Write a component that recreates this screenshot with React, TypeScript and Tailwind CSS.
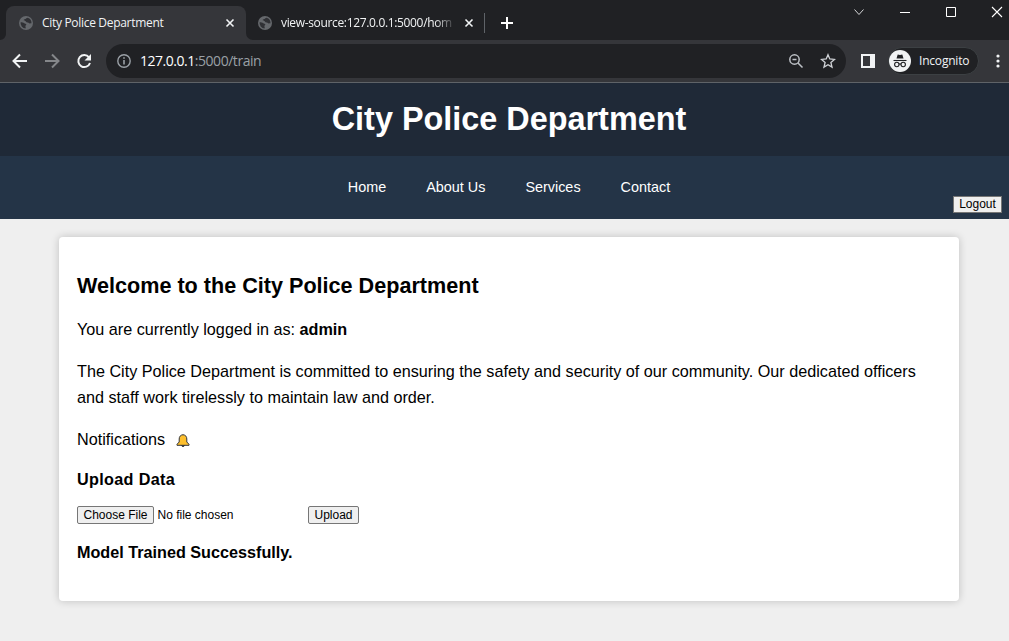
import React from "react";

function Globe() {
  return (
    <svg className="h-[14px] w-[14px] shrink-0" viewBox="0 0 14 14">
      <circle cx="7" cy="7" r="7" fill="#65686c" />
      <path d="M1.6 6.2C3 6.300 4.300 6.200 5.400 7.200c.8.8 1.800.4 1.900 1.300.1.700-1 .8-.9 1.700.1.900.5 1.200.2 2.300A5.500 5.500 0 0 1 1.600 6.200Z" fill="#303135" />
      <path d="M8.600 1.700c-1.400 0-1.200 1.100-2.300 1.300-.9.200-1.700.6-1.500 1.300.2.900 1.400.3 1.900 1 .5.900 1.200 1.300 2.200 1.200 1 0 1 1 1.800 1 .8.1 1.200-.3 1.800-.2A5.600 5.600 0 0 0 8.600 1.700Z" fill="#303135" />
    </svg>
  );
}

function CloseMark() {
  return (
    <svg className="h-[10px] w-[10px] shrink-0" viewBox="0 0 10 10" fill="none" stroke="#f1f3f4" strokeWidth="1.6">
      <path d="M1.5 1.5l7 7M8.5 1.5l-7 7" />
    </svg>
  );
}

function TabStrip() {
  return (
    <div className="flex h-10 w-[1009px] items-start bg-[#202124]">
      <div className="relative ml-[6px] mt-[6px] flex h-[34px] w-[240px] shrink-0 items-center rounded-t-lg bg-[#35363a] pl-[13px] pr-[11px]">
        <svg className="absolute bottom-0 -left-[6px] h-[6px] w-[6px]" viewBox="0 0 6 6"><path d="M6 0v6H0a6 6 0 0 0 6-6Z" fill="#35363a" /></svg>
        <svg className="absolute bottom-0 -right-[7px] h-[7px] w-[7px]" viewBox="0 0 7 7"><path d="M0 0v7h7a7 7 0 0 1-7-7Z" fill="#35363a" /></svg>
        <Globe />
        <span className="ml-[9px] flex-1 whitespace-nowrap text-[12px] leading-4 tracking-[-0.31px] text-[#f1f3f4]">City Police Department</span>
        <CloseMark />
      </div>
      <div className="mt-[6px] flex h-[34px] w-[239px] shrink-0 items-center pl-3">
        <Globe />
        <span className="ml-[9px] w-[173px] whitespace-nowrap text-[12px] leading-4 tracking-[-0.34px] text-[#f1f3f4] [mask-image:linear-gradient(to_right,black_154px,transparent_175px)]">view-source:127.0.0.1:5000/hom</span>
        <span className="ml-[10px] flex"><CloseMark /></span>
      </div>
      <div className="-ml-px mt-[13px] h-5 w-px shrink-0 bg-[#5f6368]" />
      <svg className="ml-4 mt-[17px] h-3 w-3 shrink-0" viewBox="0 0 12 12" stroke="#fff" strokeWidth="2"><path d="M6 0v12M0 6h12" /></svg>
      <div className="flex-1" />
      <svg className="h-6 w-[156px] shrink-0" viewBox="0 0 156 24" fill="none" stroke="#fff">
        <path d="M1.5 9.5l4.5 5 4.500-5" stroke="#d5d6d8" />
        <path d="M47 12.500h10" />
        <path d="M93.500 7.500h9v9h-9z" />
        <path d="M139 7l10 10M149 7l-10 10" strokeWidth="1.100" />
      </svg>
    </div>
  );
}

function Toolbar() {
  return (
    <div className="flex h-[43px] w-[1009px] items-center border-b border-[#5f6368] bg-[#35363a]">
      <svg className="h-[42px] w-[106px] shrink-0" viewBox="0 0 106 42" fill="none" stroke="#f1f3f4" strokeWidth="2">
        <path d="M27 21H14M20 14.500L13.500 21l6.500 6.500" />
        <path d="M45 21h13M52 14.500l6.500 6.500-6.500 6.500" stroke="#85878a" />
        <path d="M89 17.300A6 6 0 1 0 90 23" />
        <path d="M91 14v6.500h-6.500z" fill="#f1f3f4" stroke="none" />
      </svg>
      <div className="flex h-[34px] w-[740px] shrink-0 items-center rounded-full bg-[#202124] px-[10px] pl-[11px]">
        <svg className="h-[14px] w-[14px]" viewBox="0 0 14 14" fill="none" stroke="#9aa0a6" strokeWidth="1.400">
          <circle cx="7" cy="7" r="6.200" /><path d="M7 6v4.500M7 3.200v1.600" strokeWidth="1.600" />
        </svg>
        <span className="ml-[9px] flex-1 text-[14px] leading-5 tracking-[-0.47px] text-[#9aa0a6]"><span className="text-white">127.0.0.1</span>:5000/train</span>
        <svg className="h-4 w-4" viewBox="0 0 16 16" fill="none" stroke="#bdc1c6" strokeWidth="1.500">
          <circle cx="6.500" cy="6.500" r="4.700" /><path d="M10 10l4.500 4.500M4.500 6.500h4" />
        </svg>
        <svg className="ml-4 h-4 w-4" viewBox="0 0 16 16" fill="none" stroke="#d0d3d7" strokeWidth="1.300">
          <path d="M8 1.700l1.800 4.300 4.700.4-3.600 3.100 1.100 4.600L8 11.700l-4 2.400 1.100-4.600-3.600-3.100 4.700-.4z" />
        </svg>
      </div>
      <svg className="ml-[15px] h-[14px] w-[14px] shrink-0" viewBox="0 0 14 14"><path d="M0 0h14v14H0z" fill="#f1f3f4" /><path d="M2 2h7v10H2z" fill="#35363a" /></svg>
      <div className="ml-[13px] flex h-7 w-[91px] shrink-0 items-center rounded-full border border-[#3c4043] bg-[#202124]">
        <svg className="h-[22px] w-[22px] shrink-0" viewBox="0 0 22 22">
          <circle cx="11" cy="11" r="11" fill="#f1f3f4" />
          <path d="M7.500 8.500L8.700 4.500l2.300.6 2.300-.6 1.200 4z" fill="#202124" />
          <g fill="none" stroke="#202124" strokeWidth="1.100"><path d="M4.500 10.500h13" /><circle cx="7.800" cy="14.500" r="2.200" /><circle cx="14.200" cy="14.500" r="2.200" /><path d="M10 14.200q1-.7 2 0" /></g>
        </svg>
        <span className="ml-2 text-[12px] leading-4 tracking-[-0.2px] text-[#f1f3f4]">Incognito</span>
      </div>
      <svg className="ml-[17px] h-4 w-1 shrink-0" viewBox="0 0 4 16" fill="#f1f3f4"><circle cx="2" cy="3" r="1.600" /><circle cx="2" cy="8" r="1.600" /><circle cx="2" cy="13" r="1.600" /></svg>
    </div>
  );
}

const button = "flex items-center justify-center border border-[#767676] bg-[#efefef] text-[12px] leading-none text-black";

export default function App() {
  return (
    <div className="h-[641px] w-full overflow-hidden bg-[#efefef]">
      <div className="font-['Open_Sans',sans-serif]">
        <TabStrip />
        <Toolbar />
      </div>
      <div className="w-[1018px] font-['Liberation_Sans',Arial,sans-serif] text-black">
        <header className="flex h-[73px] items-center justify-center bg-[#1f2937] pb-[2px]">
          <h1 className="whitespace-nowrap text-[32.400px] font-bold leading-[40px] text-white">City Police Department</h1>
        </header>
        <nav className="grid h-[63px] grid-cols-[1fr_auto_1fr] bg-[#243447]">
          <div />
          <div className="flex items-center gap-10 whitespace-nowrap text-[14.400px] text-white">
            <a>Home</a><a>About Us</a><a>Services</a><a>Contact</a>
          </div>
          <div className="flex items-end justify-end pb-[6px] pr-4">
            <button className={`${button} h-[17px] w-[49px] pb-px`}>Logout</button>
          </div>
        </nav>
        <main className="mx-auto mt-[18px] h-[364px] w-[900px] rounded-[4px] bg-white pl-[18px] pt-[34px] text-[16.200px] leading-[26px] shadow-[0_0_9px_rgba(0,0,0,0.2)]">
          <h2 className="text-[21.600px] font-bold leading-[30px]">Welcome to the City Police Department</h2>
          <p className="mt-[15px]">You are currently logged in as: <b>admin</b></p>
          <p className="mt-4 whitespace-nowrap">The City Police Department is committed to ensuring the safety and security of our community. Our dedicated officers<br />and staff work tirelessly to maintain law and order.</p>
          <div className="mt-4 flex items-center">
            <span>Notifications</span>
            <svg className="ml-[10.500px] mt-[3px] h-[14px] w-[14px]" viewBox="0 0 14 14" stroke="#30343b" strokeWidth="1">
              <path d="M5.500 11.500a1.600 1.600 0 0 0 3 0z" fill="#c88c18" />
              <path d="M7 .7C4.400 1 3.200 2.700 3.200 5v3L1 10.300v1h12v-1L10.800 8V5C10.800 2.700 9.600 1 7 .7Z" fill="#fdbf2d" />
            </svg>
          </div>
          <h3 className="mt-[14px] font-bold tracking-[0.33px]">Upload Data</h3>
          <div className="mt-[14px] flex h-[18px] items-center">
            <button className={`${button} h-[18px] w-[77px] rounded-[2px]`}>Choose File</button>
            <span className="ml-[3.500px] w-[150.500px] text-[12px] leading-none">No file chosen</span>
            <button className={`${button} h-[18px] w-[51px] rounded-[2px]`}>Upload</button>
          </div>
          <p className="mt-[15px] font-bold">Model Trained Successfully.</p>
        </main>
      </div>
    </div>
  );
}
